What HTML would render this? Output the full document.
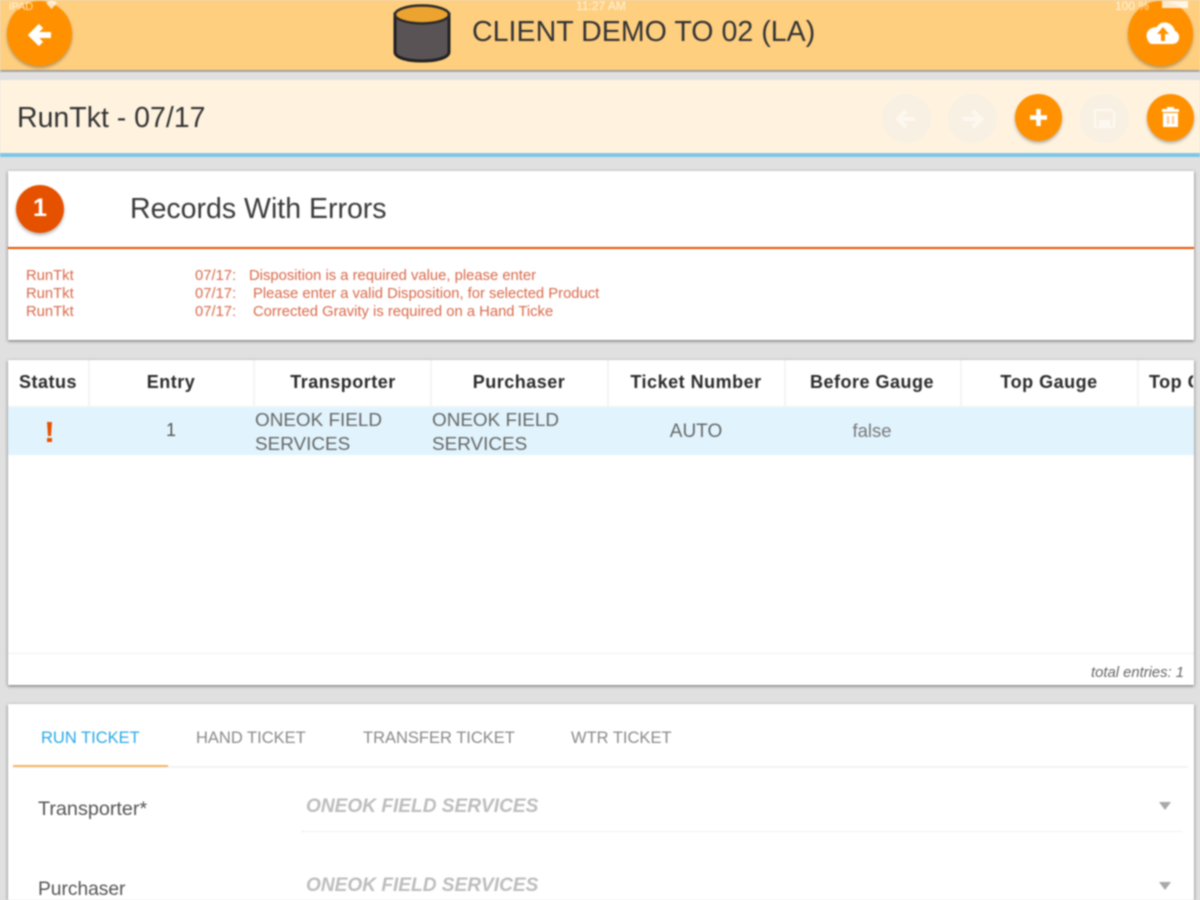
<!DOCTYPE html>
<html><head><meta charset="utf-8"><style>
html,body{margin:0;padding:0;width:1200px;height:900px;overflow:hidden;background:#e0e0e0;font-family:"Liberation Sans",sans-serif}
#p{position:absolute;left:0;top:0;width:1200px;height:900px;overflow:hidden;filter:blur(.7px)}
.a{position:absolute;white-space:nowrap}
.b{position:absolute}
.c{transform:translateX(-50%)}
.card{position:absolute;background:#fff;left:8px;width:1186px;box-shadow:0 1px 3px rgba(0,0,0,.55)}
.th{position:absolute;top:360px;height:46px;background:#fff;}
.h{font-weight:bold;font-size:18px;letter-spacing:.5px;color:#2b2b2b;top:372px}
.t{font-size:18.9px;color:#666}
.e{font-size:14.8px;color:#d9694a}
.tab{font-size:16.5px;top:729px;color:#8a8a8a}
.f{font-size:19.1px;font-style:italic;font-weight:bold;color:#bdbdbd}
.fab{position:absolute;border-radius:50%;background:#ff9100;box-shadow:0 2px 3px rgba(0,0,0,.3)}
.off{position:absolute;border-radius:50%;background:#f8f0e3}
svg{position:absolute;overflow:visible}
</style></head><body><div id="p">
<div class="b" style="left:0;top:0;width:1200px;height:70px;background:#ffcf80;box-shadow:0 2px 2px rgba(0,0,0,.35)"></div>
<div class="b" style="left:0;top:72px;width:1200px;height:8px;background:#e0e0e0"></div>
<div class="b" style="left:0;top:80px;width:1200px;height:73px;background:#fff3e0"></div>
<div class="b" style="left:0;top:153px;width:1200px;height:4px;background:#7cc6e8"></div>

<div class="fab" style="left:7px;top:1px;width:65px;height:65px"></div>
<svg style="left:0;top:0" width="80" height="70"><path d="M51 35H33M41 26l-9 9 9 9" fill="none" stroke="#fff" stroke-width="6"/></svg>

<svg style="left:380px;top:0" width="100" height="70">
<path d="M15 14V52C15 64 69 64 69 52V14Z" fill="#5a5355" stroke="#222" stroke-width="3"/>
<ellipse cx="42" cy="14.500" rx="27" ry="9" fill="#eda32f" stroke="#2b2b2b" stroke-width="2.500"/>
</svg>
<div class="a" style="left:472px;top:16px;font-size:28.6px;color:#333">CLIENT DEMO TO 02 (LA)</div>

<div class="fab" style="left:1128px;top:1px;width:65px;height:65px"></div>
<svg style="left:1120px;top:0" width="80" height="70"><path d="M32 44H52C61 44 61 33 55 31C53 22 41 19 37 27C30 27 25 32 27 38C28 42 30 44 32 44Z" fill="#fff"/><path d="M43 27l-6 7h4v7h4v-7h4z" fill="#ff9100"/></svg>

<div class="a" style="left:9px;top:1px;font-size:11px;color:#fff;opacity:.75">iPAD</div>
<svg style="left:46px;top:1px" width="12" height="9"><path d="M0 2C3 -1 8 -1 11 2L5.500 8Z" fill="#fff" opacity=".75"/></svg>
<div class="a c" style="left:601px;top:-1px;font-size:12px;color:#fff;opacity:.75">11:27 AM</div>
<div class="a" style="left:1115px;top:-1px;font-size:12px;color:#fff;opacity:.75">100 %</div>
<div class="b" style="left:1162px;top:1px;width:26px;height:7px;background:#fff;opacity:.8"></div>

<div class="a" style="left:17px;top:101.500px;font-size:28.500px;color:#333">RunTkt - 07/17</div>

<div class="off" style="left:882px;top:94px;width:49px;height:49px"></div>
<svg style="left:882px;top:94px" width="49" height="49"><path d="M33 25H17M24 17l-8 8 8 8" fill="none" stroke="#fdf8ef" stroke-width="4"/></svg>
<div class="off" style="left:948px;top:94px;width:49px;height:49px"></div>
<svg style="left:948px;top:94px" width="49" height="49"><path d="M15 25H32M25 17l8 8-8 8" fill="none" stroke="#fdf8ef" stroke-width="4"/></svg>
<div class="fab" style="left:1015px;top:94px;width:47px;height:47px"></div>
<svg style="left:1015px;top:94px" width="47" height="47"><path d="M23.500 15V32M15 23.500H32" stroke="#fff" stroke-width="4.500"/></svg>
<div class="off" style="left:1080px;top:94px;width:49px;height:49px"></div>
<svg style="left:1080px;top:94px" width="49" height="49"><path d="M15 16H31L34 19V33H15Z" fill="none" stroke="#fdf8ef" stroke-width="2"/><path d="M19 26H30V32H19Z" fill="#fdf8ef"/></svg>
<div class="fab" style="left:1147px;top:94px;width:47px;height:47px"></div>
<svg style="left:1147px;top:94px" width="47" height="47"><path d="M15 15H32V18H15ZM20 13H27V15H20ZM16 19H31V33H16Z" fill="#fff"/><path d="M21 22V30M26 22V30" stroke="#ffc78a" stroke-width="2"/></svg>

<div class="card" style="top:171px;height:169px"></div>
<div class="b" style="left:8px;top:247px;width:1186px;height:2px;background:#e65100"></div>
<div class="b" style="left:16px;top:185px;width:48px;height:48px;border-radius:50%;background:#e65100;box-shadow:0 2px 3px rgba(0,0,0,.3)"></div>
<div class="a c" style="left:40px;top:194px;font-size:25px;font-weight:bold;color:#fff">1</div>
<div class="a" style="left:130px;top:192.500px;font-size:28.500px;color:#3a3a3a">Records With Errors</div>

<div class="a e" style="left:26px;top:268px">RunTkt</div>
<div class="a e" style="left:26px;top:286px">RunTkt</div>
<div class="a e" style="left:26px;top:304px">RunTkt</div>
<div class="a e" style="left:195px;top:268px">07/17:</div>
<div class="a e" style="left:195px;top:286px">07/17:</div>
<div class="a e" style="left:195px;top:304px">07/17:</div>
<div class="a e" style="left:249px;top:268px">Disposition is a required value, please enter</div>
<div class="a e" style="left:253px;top:286px">Please enter a valid Disposition, for selected Product</div>
<div class="a e" style="left:253px;top:304px">Corrected Gravity is required on a Hand Ticke</div>

<div class="card" style="top:360px;height:325px"></div>
<div class="b" style="left:8px;top:360px;width:1186px;height:47px;background:#f4f4f4"></div>
<div class="th" style="left:8px;width:80px"></div>
<div class="th" style="left:90px;width:163px"></div>
<div class="th" style="left:255px;width:175px"></div>
<div class="th" style="left:432px;width:175px"></div>
<div class="th" style="left:609px;width:175px"></div>
<div class="th" style="left:786px;width:174px"></div>
<div class="th" style="left:962px;width:175px"></div>
<div class="th" style="left:1139px;width:55px"></div>
<div class="b" style="left:8px;top:407px;width:1186px;height:48px;background:#e1f4fd"></div>

<div class="a h c" style="left:48px">Status</div>
<div class="a h c" style="left:171px">Entry</div>
<div class="a h c" style="left:343px">Transporter</div>
<div class="a h c" style="left:519px">Purchaser</div>
<div class="a h c" style="left:696px">Ticket Number</div>
<div class="a h c" style="left:872px">Before Gauge</div>
<div class="a h c" style="left:1049px">Top Gauge</div>
<div class="b" style="left:1139px;top:360px;width:54px;height:46px;overflow:hidden"><div class="a h" style="left:10px;top:12px">Top Gravity</div></div>

<div class="b" style="left:47px;top:422px;width:5px;height:14px;background:#e65100;clip-path:polygon(0 0,100% 0,80% 100%,20% 100%)"></div>
<div class="b" style="left:47px;top:438px;width:5px;height:4px;background:#e65100"></div>
<div class="a c" style="left:171px;top:420px;font-size:18px;color:#555">1</div>
<div class="a t" style="left:255px;top:410px">ONEOK FIELD</div>
<div class="a t" style="left:255px;top:434px">SERVICES</div>
<div class="a t" style="left:432px;top:410px">ONEOK FIELD</div>
<div class="a t" style="left:432px;top:434px">SERVICES</div>
<div class="a c" style="left:696px;top:421px;font-size:19px;color:#666">AUTO</div>
<div class="a c" style="left:872px;top:420px;font-size:18.500px;color:#777">false</div>

<div class="b" style="left:8px;top:653px;width:1186px;height:1px;background:#f0f0f0"></div>
<div class="a" style="right:16px;top:665px;font-size:14.800px;font-style:italic;color:#666">total entries: 1</div>

<div class="card" style="top:704px;height:200px"></div>
<div class="b" style="left:13px;top:766px;width:1175px;height:2px;background:#f3f3f3"></div>
<div class="b" style="left:13px;top:765px;width:155px;height:2px;background:#f5b366"></div>
<div class="a tab" style="left:41px;color:#29a9e6">RUN TICKET</div>
<div class="a tab" style="left:196px">HAND TICKET</div>
<div class="a tab" style="left:363px">TRANSFER TICKET</div>
<div class="a tab" style="left:571px">WTR TICKET</div>

<div class="a" style="left:38px;top:798px;font-size:19.800px;color:#555">Transporter*</div>
<div class="a f" style="left:306px;top:796px">ONEOK FIELD SERVICES</div>
<div class="b" style="left:302px;top:831px;width:880px;border-top:1px dotted #e2e2e2"></div>
<svg style="left:1159px;top:802px" width="14" height="10"><path d="M0 0H12L6 8Z" fill="#a8a8a8"/></svg>

<div class="a" style="left:38px;top:879px;font-size:19.200px;color:#555">Purchaser</div>
<div class="a f" style="left:306px;top:875px">ONEOK FIELD SERVICES</div>
<svg style="left:1159px;top:882px" width="14" height="10"><path d="M0 0H12L6 8Z" fill="#a8a8a8"/></svg>
</div></body></html>
